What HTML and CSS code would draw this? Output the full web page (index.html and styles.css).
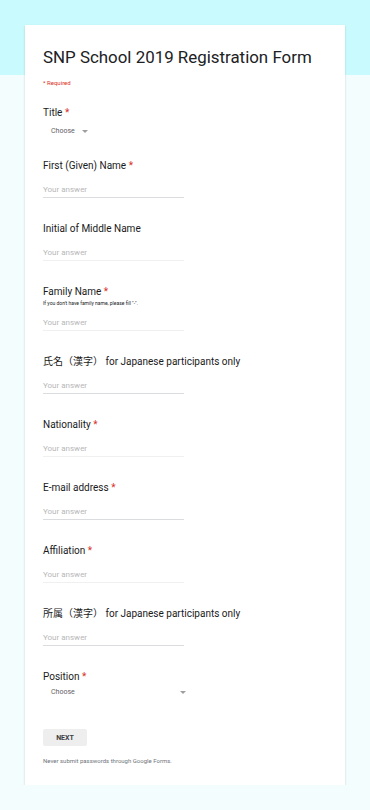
FILE: index.html
```
<!DOCTYPE html>
<html lang="en">

<head>
    <meta charset="UTF-8">
    <title>SNP School 2019 Registration Form</title>
    <link rel="stylesheet" href="styles.css">
</head>

<body>

    <div class="band"></div>

    <main class="card">
        <h1 class="form-title">SNP School 2019 Registration Form</h1>
        <p class="required-note">* Required</p>

        <div class="item item-choice">
            <label class="q">Title <span class="star">*</span></label>
            <div class="select select-small">
                <span>Choose</span>
                <span class="arrow"></span>
            </div>
        </div>

        <div class="item">
            <label class="q">First (Given) Name <span class="star">*</span></label>
            <div class="answer">Your answer</div>
        </div>

        <div class="item">
            <label class="q">Initial of Middle Name</label>
            <div class="answer faint">Your answer</div>
        </div>

        <div class="item">
            <label class="q">Family Name <span class="star">*</span></label>
            <p class="hint">If you don't have family name, please fill "-".</p>
            <div class="answer faint">Your answer</div>
        </div>

        <div class="item">
            <label class="q">氏名（漢字） for Japanese participants only</label>
            <div class="answer">Your answer</div>
        </div>

        <div class="item">
            <label class="q">Nationality <span class="star">*</span></label>
            <div class="answer faint">Your answer</div>
        </div>

        <div class="item">
            <label class="q">E-mail address <span class="star">*</span></label>
            <div class="answer">Your answer</div>
        </div>

        <div class="item">
            <label class="q">Affiliation <span class="star">*</span></label>
            <div class="answer faint">Your answer</div>
        </div>

        <div class="item">
            <label class="q">所属（漢字） for Japanese participants only</label>
            <div class="answer">Your answer</div>
        </div>

        <div class="item item-choice">
            <label class="q">Position <span class="star">*</span></label>
            <div class="select select-wide">
                <span>Choose</span>
                <span class="arrow"></span>
            </div>
        </div>

        <button class="next">NEXT</button>
        <p class="footer-note">Never submit passwords through Google Forms.</p>
    </main>

</body>

</html>
```

FILE: styles.css
```
body {
    margin: 0;
    background-color: #f3fdfe;
    font-family: Roboto, "Noto Sans CJK JP", sans-serif;
    color: #202124;
}

.band {
    height: 75px;
    background-color: #c9fbfe;
}

/* CARD */

.card {
    width: 320px;
    margin: -50px 0 0 25px;
    padding: 20px 17px 20px 18px;
    box-sizing: border-box;
    background-color: white;
    box-shadow: 0 1px 2px rgba(0, 0, 0, 0.18);
    display: flex;
    flex-direction: column;
    align-items: flex-start;
}

.form-title {
    margin: 0;
    font-size: 16.9px;
    font-weight: 400;
    line-height: 24px;
    white-space: nowrap;
}

.required-note {
    margin: 10px 0 19px 0;
    font-size: 6px;
    line-height: 8px;
    color: #d93025;
}

/* QUESTIONS */

.item {
    display: flex;
    flex-direction: column;
    align-items: flex-start;
    margin-bottom: 24px;
}

.item-choice {
    margin-bottom: 19px;
}

.q {
    font-size: 10px;
    line-height: 14px;
    color: #1a1a1a;
}

.star {
    color: #d93025;
}

.hint {
    margin: 0;
    font-size: 5px;
    line-height: 8px;
    color: #202124;
}

.answer {
    width: 141px;
    height: 15px;
    margin-top: 9px;
    border-bottom: 1px solid #dadce0;
    font-size: 8px;
    line-height: 15px;
    color: #b7b7b7;
}

.hint + .answer {
    margin-top: 8px;
}

.answer.faint {
    border-bottom-color: #f0f0f0;
}

.select {
    display: flex;
    align-items: center;
    justify-content: space-between;
    height: 18px;
    margin-top: 2px;
    padding: 0 4px 0 8px;
    box-sizing: border-box;
    font-size: 7px;
    color: #5f6368;
}

.select-small {
    width: 49px;
}

.select-wide {
    width: 147px;
    margin-top: -1px;
}

.arrow {
    width: 0;
    height: 0;
    border-left: 3px solid transparent;
    border-right: 3px solid transparent;
    border-top: 3px solid #9e9e9e;
}

/* BOTTOM */

.next {
    width: 44px;
    height: 17px;
    margin-top: 9px;
    padding: 0;
    border: none;
    border-radius: 2px;
    background-color: #eeeeee;
    font-family: Roboto, sans-serif;
    font-size: 7px;
    font-weight: 700;
    color: #3c4043;
}

.footer-note {
    margin: 11px 0 0 0;
    font-size: 6px;
    line-height: 8px;
    color: #70757a;
}
```
